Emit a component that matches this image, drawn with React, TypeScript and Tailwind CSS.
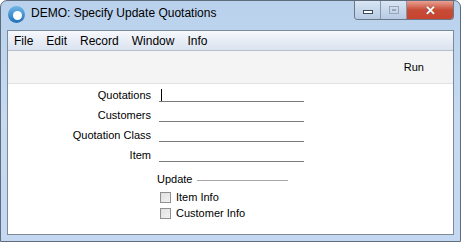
import React from 'react';

const menu = ['File', 'Edit', 'Record', 'Window', 'Info'];
const fields = ['Quotations', 'Customers', 'Quotation Class', 'Item'];

function Checkbox({ label }: { label: string }) {
  return (
    <div className="flex items-center h-[16px]">
      <div className="w-[11px] h-[11px] border border-[#8f8f8f] bg-gradient-to-br from-[#dcdcdc] to-[#f6f6f6] p-[1px]">
        <div className="w-full h-full border border-[#e8e8e8]" />
      </div>
      <span className="ml-[5px]">{label}</span>
    </div>
  );
}

export default function App() {
  return (
    <div className="w-[461px] h-[242px] bg-white" style={{ fontFamily: '"Liberation Sans", Arial, sans-serif' }}>
      <div className="w-full h-full flex flex-col rounded-t-[7px] border border-[#5f6c7b] bg-gradient-to-b from-[#b9d1ec] via-[#c6dbf2] to-[#c4d9f1] relative">
        {/* title bar */}
        <div className="h-[29px] flex items-start shrink-0">
          <div className="ml-[7px] mt-[5px] w-[17px] h-[17px] rounded-full bg-gradient-to-b from-[#6fb7e8] to-[#1c6fb8] flex items-center justify-center">
            <div className="w-[9px] h-[9px] rounded-full bg-white translate-x-[1px] translate-y-[1px]" />
          </div>
          <span className="ml-[6px] mt-[5px] text-[12px] leading-[14px] text-black">DEMO: Specify Update Quotations</span>
          <div className="ml-auto mr-[6px] flex h-[19px] rounded-b-[4px] border border-t-0 border-[#6b7888] overflow-hidden">
            <div className="w-[26px] h-full bg-gradient-to-b from-[#d8e6f5] to-[#b7cbe3] border-r border-[#8896a8] flex items-center justify-center">
              <div className="w-[10px] h-[4px] border border-[#3c4a5c] bg-white mt-[4px]" />
            </div>
            <div className="w-[26px] h-full bg-gradient-to-b from-[#d8e6f5] to-[#b7cbe3] border-r border-[#8896a8] flex items-center justify-center">
              <div className="w-[10px] h-[8px] border border-[#9aa6b4] flex items-center justify-center">
                <div className="w-[4px] h-[2px] border border-[#9aa6b4]" />
              </div>
            </div>
            <div className="w-[46px] h-full bg-gradient-to-b from-[#e8a093] via-[#c74b36] to-[#c7442f] flex items-center justify-center">
              <span className="text-white font-bold text-[13px] leading-none" style={{ textShadow: '0 0 1px #5a1d12' }}>✕</span>
            </div>
          </div>
        </div>
        {/* client */}
        <div className="mx-[6px] mb-[6px] flex-1 flex flex-col border border-[#7d8a99] bg-white">
          <div className="h-[20px] shrink-0 flex items-center bg-gradient-to-b from-[#f6f8fc] to-[#dae3f0] border-b border-[#b6bfcb] text-[12px] text-black">
            {menu.map((m, i) => (
              <span key={m} className={i === 0 ? 'ml-[6px] mr-[13px]' : 'mr-[13px]'}>
                {m}
              </span>
            ))}
          </div>
          <div className="h-[33px] shrink-0 bg-[#f4f4f4] border-b border-[#e2e2e2] flex items-center justify-end pr-[29px] text-[11px]">
            Run
          </div>
          <div className="flex flex-col pt-[4px] text-[11px] text-black">
            {fields.map((f, i) => (
              <div key={f} className="flex h-[20px] items-start">
                <div className="w-[143px] text-right leading-[13px] mt-[1px]">{f}</div>
                <div className="ml-[8px] w-[145px] h-[14px] border-b border-[#7a7a7a] relative">
                  {i === 0 && <div className="absolute left-[2px] top-[1px] w-[1px] h-[12px] bg-black" />}
                </div>
              </div>
            ))}
            <div className="mt-[3px] ml-[149px] flex items-center h-[16px]">
              <span>Update</span>
              <div className="ml-[5px] w-[91px] h-[1px] bg-[#a8a8a8] mt-[3px]" />
            </div>
            <div className="mt-[2px] ml-[152px] flex flex-col">
              <Checkbox label="Item Info" />
              <Checkbox label="Customer Info" />
            </div>
          </div>
        </div>
      </div>
    </div>
  );
}
